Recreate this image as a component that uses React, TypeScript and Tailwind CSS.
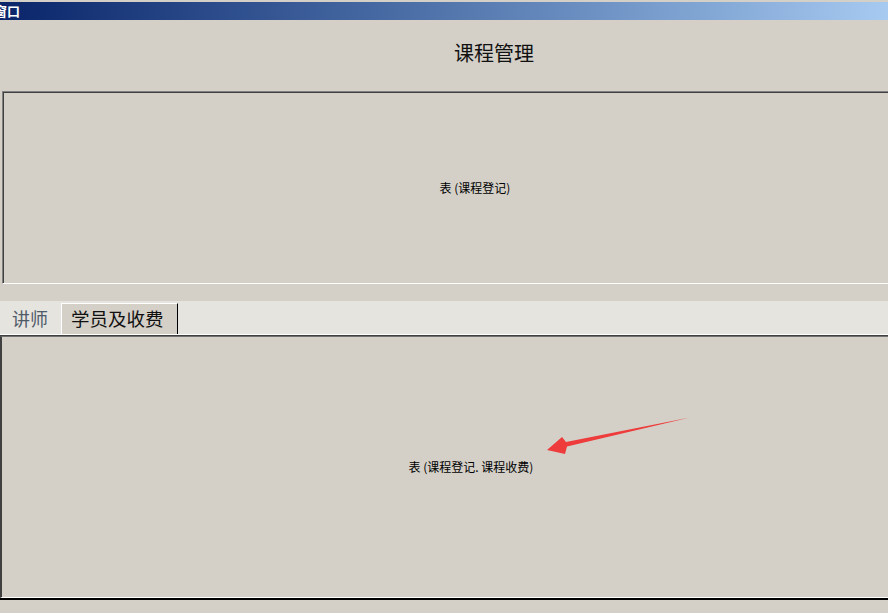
import React from 'react';

const cjk = { fontFamily: '"Noto Sans CJK SC", "Noto Sans", sans-serif' };

const App: React.FC = () => {
  return (
    <div className="relative w-[888px] h-[613px] overflow-hidden bg-[#d4d0c8] flex flex-col" style={cjk}>
      {/* Window caption */}
      <div className="h-[2px] shrink-0"></div>
      <div className="h-[18px] shrink-0 bg-gradient-to-r from-[#0a246a] to-[#a6caf0] flex items-center">
        <span className="-ml-[6px] text-white font-bold text-[13px] leading-[18px]">窗口</span>
      </div>

      {/* Form title */}
      <div className="h-[71px] shrink-0 flex justify-center pl-[100px] pt-[20px]">
        <span className="text-[20px] leading-[26px] text-[#111]">课程管理</span>
      </div>

      {/* Upper table: 课程登记 */}
      <div className="ml-[2px] w-[900px] h-[193px] shrink-0 border-l border-t border-[#808080] border-b border-b-white">
        <div className="h-full border-l border-t border-[#404040] flex items-center justify-center pl-[44px]">
          <span className="text-[12px] leading-[14px] text-black whitespace-pre">表 (课程登记)</span>
        </div>
      </div>

      <div className="h-[17px] shrink-0"></div>

      {/* Tab strip */}
      <div className="h-[34px] shrink-0 bg-[#e6e4df] border-b border-white flex items-end">
        <div className="w-[61px] h-[31px] flex items-center pl-[12px] text-[18px] text-[#4f5b68]">讲师</div>
        <div className="w-[117px] h-[31px] bg-[#d4d0c8] border-t border-l border-white border-r border-r-black flex items-center pl-[9px] text-[18.5px] text-[#111]">
          学员及收费
        </div>
      </div>

      {/* Lower table: 课程登记.课程收费 */}
      <div className="h-[263px] shrink-0 border-t border-[#404040]">
        <div className="h-full border-t border-[#707070] border-l-2 border-l-[#404040] border-b border-b-white flex items-center justify-center pl-[52px]">
          <span className="text-[12px] leading-[14px] text-black whitespace-pre">表 (课程登记. 课程收费)</span>
        </div>
      </div>
      <div className="h-[2px] shrink-0 bg-black"></div>
      <div className="flex-1"></div>

      {/* Annotation arrow */}
      <svg className="absolute left-0 top-0 pointer-events-none" width="888" height="613" viewBox="0 0 888 613">
        <polygon
          points="547,450 562,437 566,442 690,417.5 567,446.5 565,454"
          fill="#ee3b3b"
        />
      </svg>
    </div>
  );
};

export default App;
